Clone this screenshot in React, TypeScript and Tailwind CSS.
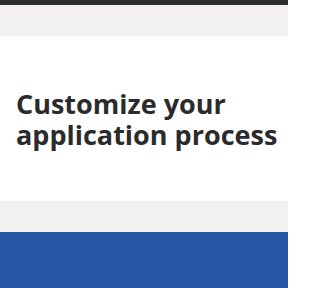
export default function App() {
  return (
    <div className="w-[288px] h-[288px] overflow-hidden bg-white font-['Open_Sans',sans-serif]">
      <div className="h-[5px] bg-[#2d2d2d]" />
      <div className="h-[31px] bg-[#f2f1ef]" />
      <div className="h-[165px] bg-white pl-4 flex flex-col justify-center">
        <h1 className="text-[27px] leading-[31px] font-bold text-[#2b2b2b] whitespace-nowrap">
          Customize your
          <br />
          application process
        </h1>
      </div>
      <div className="h-[31px] bg-[#f2f1ef]" />
      <div className="h-[56px] bg-[#2456a4]" />
    </div>
  );
}
